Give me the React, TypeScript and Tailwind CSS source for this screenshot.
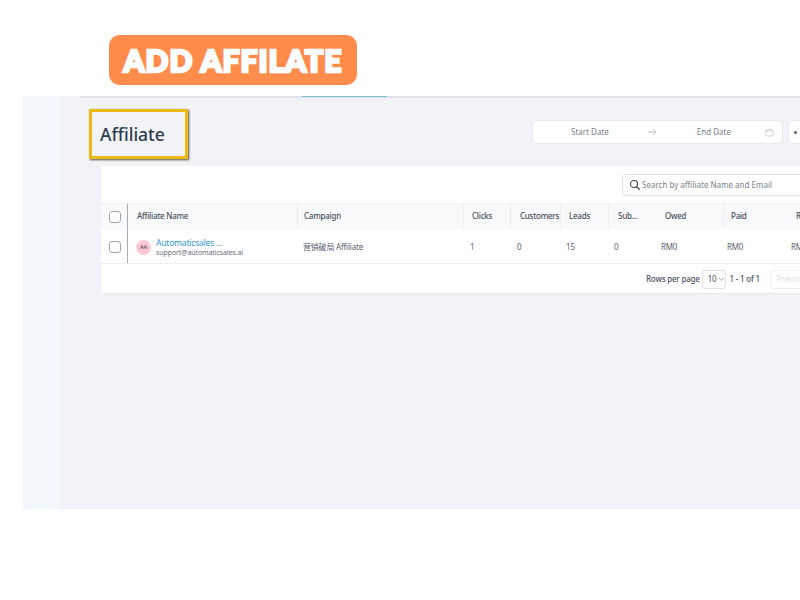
import React from "react";

const cols = "grid-cols-[26px_170px_166px_47px_50px_48px_50px_65px_62px_80px]";

function Head({ children, cls = "" }: { children?: React.ReactNode; cls?: string }) {
  return <div className={`flex items-center h-full pb-[2px] border-l border-[#eceef2] whitespace-nowrap ${cls}`}>{children}</div>;
}

function Cell({ children, cls = "" }: { children?: React.ReactNode; cls?: string }) {
  return <div className={`flex items-center h-full pt-[2px] whitespace-nowrap text-[8px] tracking-[-0.2px] text-[#5a626e] ${cls}`}>{children}</div>;
}

function Check() {
  return <div className="w-[12px] h-[12px] rounded-[3px] border border-[#a3a7ad] bg-white" />;
}

export default function App() {
  return (
    <div className="w-[800px] h-[600px] bg-white overflow-hidden font-['Noto_Sans','Noto_Sans_CJK_SC',sans-serif]">
      <div className="h-[96px] pt-[35px] pl-[109px]">
        <div className="w-[248px] h-[50px] rounded-[11px] bg-[#ff8c4b] flex items-center justify-center text-white text-[30px] leading-none font-black tracking-[1px] font-['Lato',sans-serif] [-webkit-text-stroke:2.5px_white]">
          ADD AFFILATE
        </div>
      </div>
      <div className="ml-[23px] h-[413px] flex overflow-hidden">
        <div className="w-[37px] shrink-0 bg-[#f1f7fa]" />
        <div className="flex-1 min-w-0 bg-[#f1f3f6] flex flex-col">
          <div className="h-[2px] flex shrink-0">
            <div className="w-[20px] bg-[#f1f3f6]" />
            <div className="flex-1 bg-[#dfe1e4] flex">
              <div className="ml-[222px] w-[85px] h-[1px] bg-[#7cc4d8]" />
            </div>
          </div>
          <div className="h-[68px] shrink-0 flex">
            <div className="ml-[29px] mt-[11px] w-[99px] h-[50px] shrink-0 border-[3px] border-[#eab913] shadow-[1px_1px_2px_#55513f] flex items-center pl-[8px] text-[17.5px] font-medium text-[#2f3c4e]">
              Affiliate
            </div>
            <div className="ml-[344px] mt-[22px] w-[251px] h-[24px] rounded-[6px] bg-white border border-[#e8eaee] flex items-center text-[8px] text-[#7a808a] shrink-0">
              <span className="ml-[38px]">Start Date</span>
              <svg className="ml-[38px]" width="10" height="8" viewBox="0 0 10 8" fill="none" stroke="#b4b8bd" strokeWidth="0.8"><path d="M1 4h8M6 1l3 3-3 3" /></svg>
              <span className="ml-[40px]">End Date</span>
              <svg className="ml-[34px]" width="9" height="9" viewBox="0 0 9 9" fill="none" stroke="#c4c7cb" strokeWidth="0.8"><rect x="1" y="1.5" width="7" height="6.5" rx="1" /><path d="M1 3h7" /></svg>
            </div>
            <div className="ml-[5px] mt-[22px] w-[40px] h-[24px] rounded-[6px] bg-white border border-[#e8eaee] shrink-0 flex items-center pl-[5px]">
              <div className="w-[3px] h-[3px] rounded-full bg-[#555]" />
            </div>
          </div>
          <div className="ml-[41px] w-[720px] h-[128px] bg-white rounded-tl-[3px] rounded-bl-[3px] border-b border-[#e6e8ec] flex flex-col shrink-0">
            <div className="h-[37px] pt-[8px] pl-[521px] shrink-0">
              <div className="w-[199px] h-[22px] rounded-[4px] border border-[#dfe1e5] flex items-center pl-[6px] text-[8px] text-[#7c828b]">
                <svg width="12" height="12" viewBox="0 0 24 24" fill="none" stroke="#3f4650" strokeWidth="2.2" strokeLinecap="round"><circle cx="10" cy="10" r="7" /><path d="M15.5 15.5 21 21" /></svg>
                <span className="ml-[1px]">Search by affiliate Name and Email</span>
              </div>
            </div>
            <div className={`grid ${cols} h-[26px] shrink-0 bg-[#f8f9fb] border-t border-[#eceef2] text-[8px] tracking-[-0.25px] font-medium text-[#49515d]`}>
              <div className="flex items-center h-full pl-[8px]"><Check /></div>
              <Head cls="pl-[9px] !border-l-[#a9acb0]">Affiliate Name</Head>
              <Head cls="pl-[6px]">Campaign</Head>
              <Head cls="pl-[8px]">Clicks</Head>
              <Head cls="pl-[9px]">Customers</Head>
              <Head cls="pl-[8px]">Leads</Head>
              <Head cls="pl-[9px]">Sub...</Head>
              <Head cls="pl-[7px] border-l-0">Owed</Head>
              <Head cls="pl-[7px]">Paid</Head>
              <Head cls="pl-[11px] border-l-0">Revenue</Head>
            </div>
            <div className={`grid ${cols} h-[35px] shrink-0 border-b border-[#eceef2]`}>
              <div className="flex items-center h-full pl-[8px] pt-[2px]"><Check /></div>
              <Cell cls="pl-[8px] border-l border-[#a9acb0]">
                <div className="w-[15px] h-[15px] rounded-full bg-[#fbc8d4] flex items-center justify-center text-[5.5px] font-semibold text-[#6b5a60]">AA</div>
                <div className="ml-[5px] flex flex-col">
                  <span className="text-[8.5px] tracking-[-0.2px] leading-[11px] text-[#2e97d1]">Automaticsales ...</span>
                  <span className="text-[7px] tracking-[-0.1px] leading-[10px] text-[#6a7079]">support@automaticsales.ai</span>
                </div>
              </Cell>
              <Cell cls="pl-[6px]">营销破局 Affiliate</Cell>
              <Cell cls="pl-[7px]">1</Cell>
              <Cell cls="pl-[7px]">0</Cell>
              <Cell cls="pl-[6px]">15</Cell>
              <Cell cls="pl-[6px]">0</Cell>
              <Cell cls="pl-[3px]">RM0</Cell>
              <Cell cls="pl-[4px]">RM0</Cell>
              <Cell cls="pl-[6px]">RM0</Cell>
            </div>
            <div className="flex-1 flex items-center pt-[1px] pl-[545px] text-[8px] tracking-[-0.2px] font-medium text-[#4a5361] whitespace-nowrap">
              <span>Rows per page</span>
              <div className="ml-[2px] w-[28px] h-[19px] rounded-[3px] border border-[#dfe1e5] flex items-center pl-[5px] gap-[2px] font-normal">
                10
                <svg width="7" height="5" viewBox="0 0 7 5" fill="none" stroke="#8b9097" strokeWidth="0.8"><path d="M1 1l2.5 2.5L6 1" /></svg>
              </div>
              <span className="ml-[3px]">1 - 1 of 1</span>
              <div className="ml-[10px] w-[60px] h-[19px] rounded-[3px] border border-[#f0f1f3] pl-[6px] flex items-center font-normal text-[#e0e2e5]">Previous</div>
            </div>
          </div>
        </div>
      </div>
    </div>
  );
}
